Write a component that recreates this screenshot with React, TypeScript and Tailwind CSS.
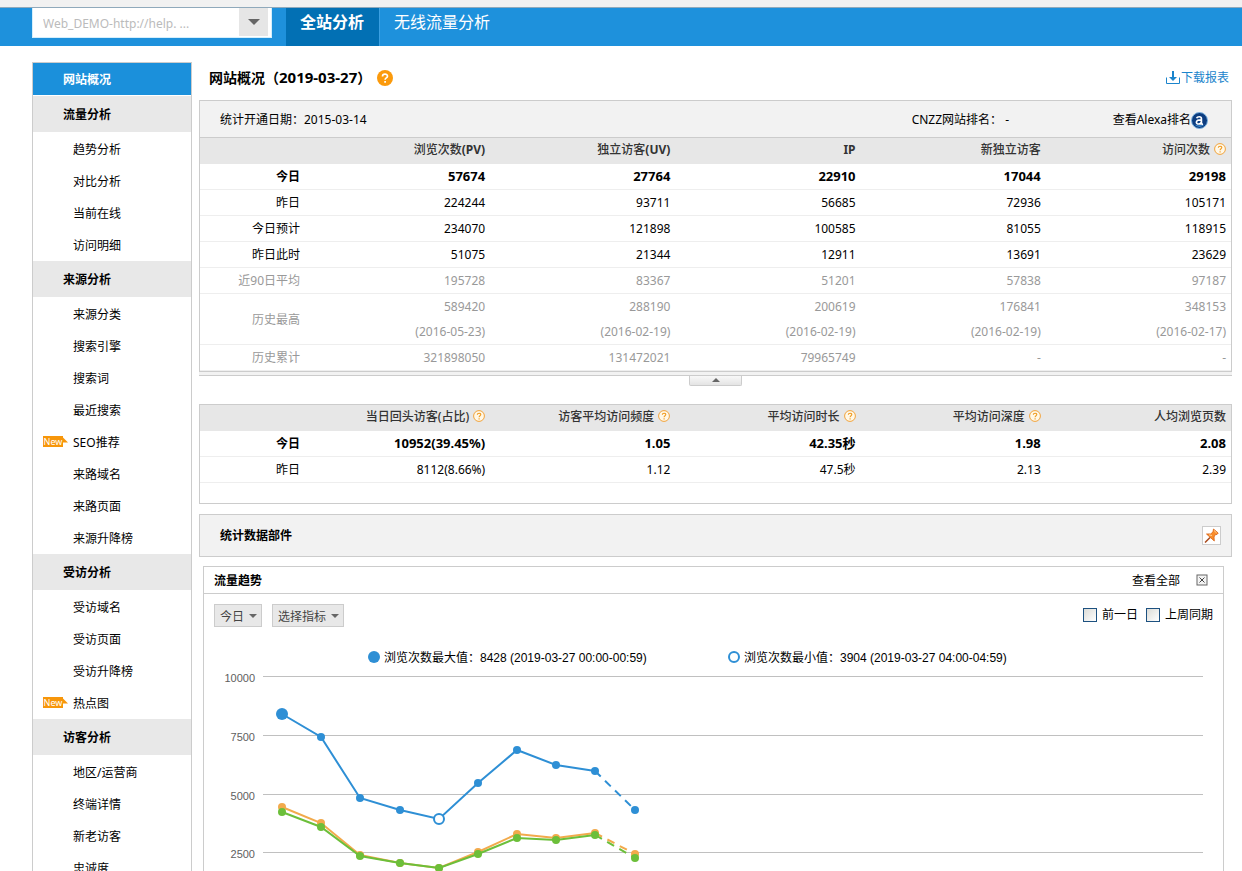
import type { ReactNode } from 'react';

type MenuItem = { label: string; isNew?: boolean };
type Series = { color: string; points: [number, number][] };

const MENU: { title: string; items: MenuItem[] }[] = [
  {
    title: '流量分析',
    items: [{ label: '趋势分析' }, { label: '对比分析' }, { label: '当前在线' }, { label: '访问明细' }],
  },
  {
    title: '来源分析',
    items: [
      { label: '来源分类' },
      { label: '搜索引擎' },
      { label: '搜索词' },
      { label: '最近搜索' },
      { label: 'SEO推荐', isNew: true },
      { label: '来路域名' },
      { label: '来路页面' },
      { label: '来源升降榜' },
    ],
  },
  {
    title: '受访分析',
    items: [{ label: '受访域名' }, { label: '受访页面' }, { label: '受访升降榜' }, { label: '热点图', isNew: true }],
  },
  {
    title: '访客分析',
    items: [{ label: '地区/运营商' }, { label: '终端详情' }, { label: '新老访客' }, { label: '忠诚度' }],
  },
];

type Column = { label: string; abbr?: string; help?: boolean };
type Row = { label: string; cells: string[]; dates?: string[]; tone?: 'bold' | 'muted' };

const SUMMARY_COLUMNS: Column[] = [
  { label: '浏览次数', abbr: '(PV)' },
  { label: '独立访客', abbr: '(UV)' },
  { label: '', abbr: 'IP' },
  { label: '新独立访客' },
  { label: '访问次数', help: true },
];

const SUMMARY_ROWS: Row[] = [
  { label: '今日', cells: ['57674', '27764', '22910', '17044', '29198'], tone: 'bold' },
  { label: '昨日', cells: ['224244', '93711', '56685', '72936', '105171'] },
  { label: '今日预计', cells: ['234070', '121898', '100585', '81055', '118915'] },
  { label: '昨日此时', cells: ['51075', '21344', '12911', '13691', '23629'] },
  { label: '近90日平均', cells: ['195728', '83367', '51201', '57838', '97187'], tone: 'muted' },
  {
    label: '历史最高',
    cells: ['589420', '288190', '200619', '176841', '348153'],
    dates: ['(2016-05-23)', '(2016-02-19)', '(2016-02-19)', '(2016-02-19)', '(2016-02-17)'],
    tone: 'muted',
  },
  { label: '历史累计', cells: ['321898050', '131472021', '79965749', '-', '-'], tone: 'muted' },
];

const VISIT_COLUMNS: Column[] = [
  { label: '当日回头访客(占比)', help: true },
  { label: '访客平均访问频度', help: true },
  { label: '平均访问时长', help: true },
  { label: '平均访问深度', help: true },
  { label: '人均浏览页数' },
];

const VISIT_ROWS: Row[] = [
  { label: '今日', cells: ['10952(39.45%)', '1.05', '42.35秒', '1.98', '2.08'], tone: 'bold' },
  { label: '昨日', cells: ['8112(8.66%)', '1.12', '47.5秒', '2.13', '2.39'] },
];

const GRID = [
  { y: 37, label: '10000' },
  { y: 96, label: '7500' },
  { y: 155, label: '5000' },
  { y: 213, label: '2500' },
];

const IP_SERIES: Series = {
  color: '#f2aa4c',
  points: [[78, 167], [117, 183], [156, 215], [196, 223], [235, 228], [274, 212], [313, 194], [352, 198], [391, 193], [431, 214]],
};
const UV_SERIES: Series = {
  color: '#6cbf3a',
  points: [[78, 172], [117, 187], [156, 216], [196, 223], [235, 228], [274, 214], [313, 198], [352, 200], [391, 195], [431, 218]],
};
const PV_SERIES: Series = {
  color: '#2e8fd5',
  points: [[78, 74], [117, 97], [156, 158], [196, 170], [235, 179], [274, 143], [313, 110], [352, 125], [391, 131], [431, 170]],
};

const TONES = {
  bold: { label: 'font-bold text-black', cell: 'text-[13px] font-bold text-black' },
  muted: { label: 'font-normal text-[#999]', cell: 'text-[#999]' },
  normal: { label: 'font-normal text-black', cell: 'text-black' },
};

function Caret({ className }: { className: string }) {
  return (
    <svg className={className} viewBox="0 0 10 5" aria-hidden="true">
      <path d="M0 0h10L5 5z" fill="currentColor" />
    </svg>
  );
}

function HelpMark() {
  return (
    <svg className="ml-1 inline-block h-3 w-3 align-[-1px]" viewBox="0 0 12 12" aria-hidden="true">
      <circle cx="6" cy="6" r="5.4" fill="#fff8e8" stroke="#f2a33a" />
      <path d="M4.3 4.7C4.3 2.7 7.8 2.7 7.8 4.6 7.8 5.8 6.1 5.7 6.1 7.2M6.1 8.2v1.2" fill="none" stroke="#f09a20" strokeWidth="1.1" />
    </svg>
  );
}

function NewBadge() {
  return (
    <span className="absolute top-2.5 left-2.5 flex h-[11px] items-center" aria-hidden="true">
      <span className="h-[11px] w-5 bg-[#f7960a] text-center text-[9px] leading-[11px] text-white">New</span>
      <svg className="h-[11px] w-[5px]" viewBox="0 0 5 11">
        <path d="M0 1.5L5 6.5H0z" fill="#f7960a" />
      </svg>
    </span>
  );
}

function Sidebar() {
  return (
    <nav className="w-40 shrink-0 border border-[#ccc] bg-white">
      <a href="#overview" className="block h-8 bg-[#1b90db] pl-[30px] leading-[34px] font-bold text-white">
        网站概况
      </a>
      {MENU.map((group, i) => (
        <section key={group.title} className={i === 0 ? 'mt-px' : undefined}>
          <h2 className="h-9 bg-[#e8e8e8] pl-[30px] leading-[38px] font-bold">{group.title}</h2>
          <ul className="pt-px">
            {group.items.map(item => (
              <li key={item.label} className="relative">
                {item.isNew && <NewBadge />}
                <a href={`#${item.label}`} className="block h-8 pl-10 leading-[34px]">
                  {item.label}
                </a>
              </li>
            ))}
          </ul>
        </section>
      ))}
    </nav>
  );
}

function StatTable({ label, columns, rows }: { label: string; columns: Column[]; rows: Row[] }) {
  return (
    <table aria-label={label} className="w-full table-fixed border-separate border-spacing-0 text-right">
      <thead>
        <tr className="h-[26px] bg-[#e7e7e7] leading-6 text-[#333]">
          <td className="w-[105px]" />
          {columns.map(col => (
            <th key={col.label} scope="col" className="pr-[5px] pb-0.5 text-right font-medium whitespace-nowrap">
              {col.label}
              {col.abbr && <b className="font-bold">{col.abbr}</b>}
              {col.help && <HelpMark />}
            </th>
          ))}
        </tr>
      </thead>
      <tbody>
        {rows.map(row => {
          const tone = TONES[row.tone ?? 'normal'];
          return (
            <tr key={row.label} className="leading-[25px]">
              <th scope="row" className={`border-b border-[#eee] pr-[5px] text-right ${tone.label}`}>
                {row.label}
              </th>
              {row.cells.map((cell, i) => (
                <td key={i} className={`border-b border-[#eee] pr-[5px] leading-[25px] ${tone.cell}`}>
                  {cell}
                  {row.dates && <div>{row.dates[i]}</div>}
                </td>
              ))}
            </tr>
          );
        })}
      </tbody>
    </table>
  );
}

function ToolbarSelect({ label, value }: { label: string; value: string }) {
  return (
    <div className="relative">
      <select
        aria-label={label}
        className="block h-[23px] appearance-none border border-[#ccc] bg-[#e8e8e8] pt-0.5 pr-4 pl-[5px] text-[#444]"
      >
        <option>{value}</option>
      </select>
      <Caret className="pointer-events-none absolute top-2.5 right-[5px] h-1 w-2 text-[#666]" />
    </div>
  );
}

function CompareBox({ children }: { children: ReactNode }) {
  return (
    <label className="flex items-center gap-[5px]">
      <input
        type="checkbox"
        className="h-3.5 w-3.5 appearance-none border border-[#1d5180] bg-linear-to-br from-[#dcdcd7] to-white checked:bg-[#1d5180]"
      />
      {children}
    </label>
  );
}

function SeriesLine({ color, points }: Series) {
  const solid = points.slice(0, -1);
  const last = points.slice(-2);
  return (
    <g stroke={color} fill={color} strokeWidth="2">
      <polyline points={solid.map(p => p.join(',')).join(' ')} fill="none" />
      <polyline points={last.map(p => p.join(',')).join(' ')} fill="none" strokeDasharray="8 6" />
      {points.map(([x, y]) => (
        <circle key={x} cx={x} cy={y} r="4" stroke="none" />
      ))}
    </g>
  );
}

function TrendChart() {
  return (
    <svg
      className="block w-full font-['Liberation_Sans','Noto_Sans_CJK_SC',sans-serif]"
      viewBox="0 0 1019 300"
      role="img"
      aria-label="流量趋势"
    >
      <circle cx="170" cy="17" r="6" fill="#2e8fd5" />
      <text x="180" y="22" fontSize="12">浏览次数最大值：8428 (2019-03-27 00:00-00:59)</text>
      <circle cx="530" cy="17" r="5" fill="#fff" stroke="#2e8fd5" strokeWidth="2" />
      <text x="540" y="22" fontSize="12">浏览次数最小值：3904 (2019-03-27 04:00-04:59)</text>

      {GRID.map(line => (
        <g key={line.label}>
          <path d={`M59 ${line.y - 0.5}H999`} stroke="#c0c0c0" />
          <text x="51" y={line.y + 5} fontSize="11" fill="#606060" textAnchor="end">{line.label}</text>
        </g>
      ))}

      <SeriesLine {...IP_SERIES} />
      <SeriesLine {...UV_SERIES} />
      <SeriesLine {...PV_SERIES} />
      {/* max and min markers */}
      <circle cx="78" cy="74" r="6" fill="#2e8fd5" />
      <circle cx="235" cy="179" r="5" fill="#fff" stroke="#2e8fd5" strokeWidth="2" />
    </svg>
  );
}

function Header() {
  return (
    <header>
      <div className="h-2 border-b border-[#8fa9bb] bg-[#f1f1f1]" />
      <div className="flex h-[38px] bg-[#1e91dc] pl-8 text-base">
        <div className="relative h-[30px] w-60">
          <select
            aria-label="站点"
            className="block h-full w-full appearance-none border border-t-0 border-[#d5effc] bg-white pt-0.5 pl-2.5 text-xs text-[#bbb]"
          >
            <option>Web_DEMO-http://help. ...</option>
          </select>
          <span className="pointer-events-none absolute top-0 right-1 flex h-7 w-[29px] items-center justify-center bg-[#e6e6e6]">
            <Caret className="h-1.5 w-3 text-[#666]" />
          </span>
        </div>
        <a href="#site" className="ml-3.5 h-full bg-[#0270b4] pr-[15px] pl-3.5 leading-7 font-bold text-white">
          全站分析
        </a>
        <a href="#wireless" className="h-full border-l border-[#3ba0e2] px-3.5 leading-7 text-white">
          无线流量分析
        </a>
      </div>
    </header>
  );
}

function SummaryPanel() {
  return (
    <section>
      <div className="border border-[#ccc]">
        <div className="flex h-[37px] items-center border-b border-[#ccc] bg-[#f2f2f2] pt-0.5 pr-[23px] pl-5">
          <span>统计开通日期：2015-03-14</span>
          <span className="ml-auto w-[201px]">CNZZ网站排名： -</span>
          <a href="#alexa" className="flex items-center">
            查看Alexa排名
            <svg className="h-[17px] w-[17px]" viewBox="0 0 17 17" aria-hidden="true">
              <circle cx="8.5" cy="8.5" r="8" fill="#0d3d80" stroke="#7fb4e0" />
              <path d="M3 12a7 7 0 0 0 11 0c-3 2-8 2-11 0z" fill="#4ea3e6" />
              <path
                d="M5.6 6.3C6.3 4.3 10.4 4.1 10.4 6.6V11.2C10.4 12 11 12.2 11.9 11.9M10.4 7.8C7.6 7.7 5.4 8.5 5.4 10.3 5.4 12.6 9.4 12.6 10.4 10.2"
                fill="none"
                stroke="#fff"
                strokeWidth="1.7"
              />
            </svg>
          </a>
        </div>
        <StatTable label="网站概况" columns={SUMMARY_COLUMNS} rows={SUMMARY_ROWS} />
      </div>
      <div className="h-1 border-b border-[#ccc] bg-[#f2f2f2]" />
      <button
        type="button"
        aria-label="收起"
        className="mx-auto flex h-2.5 w-[53px] items-center justify-center rounded-b-xs border border-t-0 border-[#ccc] bg-linear-to-b from-[#f8f8f8] to-[#e4e4e4] pb-0.5"
      >
        <Caret className="h-1 w-2 rotate-180 text-[#666]" />
      </button>
    </section>
  );
}

function TrendPanel() {
  return (
    <section className="mx-1 mt-[9px] mr-2 border border-[#ccc]">
      <div className="flex h-[27px] items-center border-b border-[#ccc] pr-[15px] pl-2.5">
        <h2 className="pt-0.5 font-bold">流量趋势</h2>
        <a href="#all" className="ml-auto pt-0.5">查看全部</a>
        <button type="button" aria-label="关闭" className="ml-4">
          <svg className="h-3 w-3" viewBox="0 0 12 12" aria-hidden="true">
            <rect x="1" y="1" width="10" height="10" fill="#f4f4f4" stroke="#666" />
            <path d="M3.5 3.5l5 5M8.5 3.5l-5 5" stroke="#444" />
          </svg>
        </button>
      </div>
      <div className="flex items-center gap-2.5 px-2.5 pt-2.5 pb-[13px]">
        <ToolbarSelect label="日期" value="今日" />
        <ToolbarSelect label="指标" value="选择指标" />
        <div className="ml-auto flex gap-2 pb-0.5">
          <CompareBox>前一日</CompareBox>
          <CompareBox>上周同期</CompareBox>
        </div>
      </div>
      <TrendChart />
    </section>
  );
}

export default function App() {
  return (
    <div className="h-screen overflow-hidden bg-white font-['Noto_Sans','Noto_Sans_CJK_SC',sans-serif] text-xs text-black">
      <Header />
      <div className="flex items-start pt-4 pr-2.5 pl-8">
        <Sidebar />
        <main className="ml-[7px] min-w-0 flex-1">
          <div className="flex h-[38px] items-center pr-[3px] pb-1.5 pl-2.5">
            <h1 className="text-sm font-bold">
              网站概况（<span className="text-[15px]">2019-03-27</span>）
            </h1>
            <button type="button" aria-label="帮助" className="ml-1.5">
              <svg className="h-4 w-4" viewBox="0 0 16 16" aria-hidden="true">
                <circle cx="8" cy="8" r="8" fill="#fb9a0c" />
                <path d="M5.5 6.4C5.5 3.4 10.5 3.4 10.5 6.2 10.5 8 8.1 7.8 8.1 9.8M8.1 11v1.8" fill="none" stroke="#fff" strokeWidth="1.7" />
              </svg>
            </button>
            <a href="#download" className="ml-auto flex items-center text-[#1b84cc]">
              <svg className="h-4 w-4" viewBox="0 0 16 16" aria-hidden="true">
                <path d="M1.5 7.5v6h13v-6" fill="none" stroke="currentColor" />
                <path d="M8 1v7" stroke="currentColor" strokeWidth="2" />
                <path d="M4 7h8l-4 4z" fill="currentColor" />
              </svg>
              下载报表
            </a>
          </div>

          <SummaryPanel />

          <section className="mt-[18px] border border-[#ccc] pb-5">
            <StatTable label="访问质量" columns={VISIT_COLUMNS} rows={VISIT_ROWS} />
          </section>

          <div className="mt-2.5 flex h-[43px] items-center border border-[#ccc] bg-[#f2f2f2] pr-2.5 pl-5">
            <h2 className="font-bold">统计数据部件</h2>
            <button type="button" aria-label="固定" className="ml-auto h-[19px] w-[19px] border border-[#ccc] bg-white p-px">
              <svg className="h-[15px] w-[15px]" viewBox="0 0 15 15" aria-hidden="true">
                <path d="M1 14.5L6 9.5" stroke="#a8491c" strokeWidth="1.5" />
                <path d="M9.5 1L14.2 5 13 6.5 11.3 6.6 10 9 10.3 13 2.5 6 6.8 5.9 9 3.8z" fill="#f98d2b" stroke="#d95f10" strokeWidth="0.8" />
                <path d="M10 2.5L12.7 5M5 6.8L8 7.5" stroke="#ffd29a" />
              </svg>
            </button>
          </div>

          <TrendPanel />
        </main>
      </div>
    </div>
  );
}
